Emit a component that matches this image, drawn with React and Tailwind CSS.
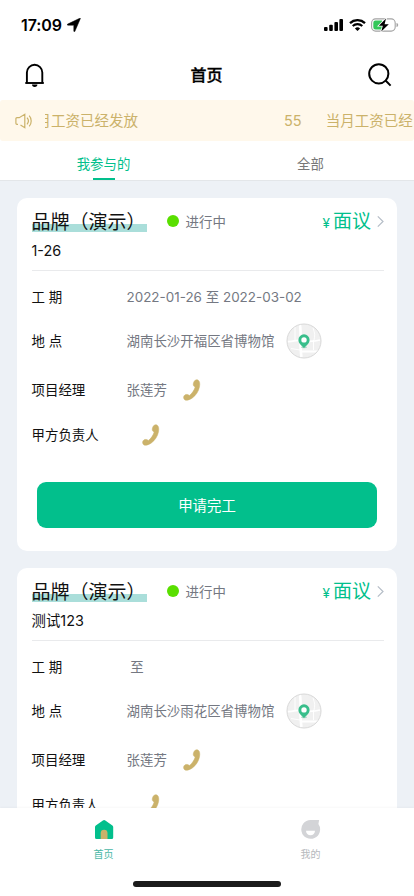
import React from 'react';

const FONT = "font-['Inter','Noto_Sans_CJK_SC',sans-serif]";

function StatusBar() {
  return (
    <div className="flex h-[50px] items-center justify-between pl-[21px] pr-[15px]">
      <div className="flex items-center gap-[5px]">
        <span className="text-[16px] font-semibold leading-none tracking-[-0.1px]">17:09</span>
        <svg className="h-[14px] w-[14px]" viewBox="0 0 14 14">
          <path d="M13.400.5 7.900 13.300c-.3.700-1.100.500-1.100-.2V7.600c0-.3-.1-.4-.4-.4H.9c-.8 0-.9-.8-.2-1.100L12.700.3c.5-.2.8-.1.700.2z" fill="#000" stroke="#000" strokeWidth=".5" />
        </svg>
      </div>
      <div className="flex items-center">
        <svg className="h-[12px] w-[19px]" viewBox="0 0 19 12">
          <rect x="0" y="8" width="3.600" height="4" rx="1" />
          <rect x="5.200" y="5.800" width="3.600" height="6.200" rx="1" />
          <rect x="10.400" y="3" width="3.600" height="9" rx="1" />
          <rect x="15.400" y="0" width="3.600" height="12" rx="1" />
        </svg>
        <svg className="ml-[6px] h-[12px] w-[17px]" viewBox="0 0 17 12" fill="none" stroke="#000">
          <path d="M1 4.100a11 11 0 0 1 15 0" strokeWidth="2.300" />
          <path d="M3.700 7a7.100 7.100 0 0 1 9.600 0" strokeWidth="2.100" />
          <path d="M8.500 12 5.900 9.400a3.800 3.800 0 0 1 5.200 0z" fill="#000" stroke="none" />
        </svg>
        <svg className="ml-[5px] h-[14px] w-[28px]" viewBox="0 0 28 14">
          <rect x=".6" y=".9" width="23.600" height="12.200" rx="4" fill="none" stroke="#a3a3a3" strokeWidth="1.100" />
          <path d="M25.500 5v4c1.200-.4 1.700-1.200 1.700-2s-.5-1.600-1.700-2z" fill="#a3a3a3" />
          <path d="M4.500 2.500h6.500v9h-6.500a2.200 2.200 0 0 1-2.200-2.200V4.700a2.200 2.200 0 0 1 2.200-2.200z" fill="#34c759" />
          <path d="M15 .6 7.800 7.700h4l-1.500 5.700L17.800 6.200h-4.200z" fill="#000" stroke="#fff" strokeWidth="1.500" paintOrder="stroke" />
        </svg>
      </div>
    </div>
  );
}

function Header() {
  return (
    <header className="flex h-[50px] items-center justify-between pl-[24px] pr-[22px]">
      <svg className="h-[26px] w-[21px]" viewBox="0 0 21 26" fill="none" stroke="#000" strokeWidth="1.900">
        <path d="M2.900 21V10.500a7.700 7.700 0 0 1 15.400 0V21" />
        <path d="M1.300 21h18.500" />
        <path d="M8 22.600h5.400a2.700 2.400 0 0 1-5.400 0z" fill="#000" stroke="none" />
      </svg>
      <h1 className="text-[16px] font-medium leading-none [-webkit-text-stroke:0.300px_#000]">首页</h1>
      <svg className="h-[24px] w-[24px]" viewBox="0 0 24 24" fill="none" stroke="#000" strokeWidth="2">
        <circle cx="10.800" cy="10.800" r="9.600" />
        <path d="m17.300 17.300 5.300 5.300" />
      </svg>
    </header>
  );
}

function Notice() {
  return (
    <div className="flex h-[41px] items-center overflow-hidden rounded-[3px] bg-[#fff8eb] pl-[15px] text-[14.500px] leading-none text-[#cbb26a]">
      <svg className="h-[16px] w-[19px] shrink-0" viewBox="0 0 19 16" fill="none" stroke="#cbb26a" strokeWidth="1.200">
        <path d="M3 11.300H1.900a1 1 0 0 1-1-1V5.700a1 1 0 0 1 1-1h2.300L9.800 1.300v13.400L5.500 12" />
        <path d="M12 4.700a5 5 0 0 1 0 6.600M14.200 2.700a8 8 0 0 1 0 10.600" />
      </svg>
      <div className="ml-[11px] flex w-[368px] overflow-hidden whitespace-nowrap leading-[20px]">
        <span className="-ml-[23px]">当月工资已经发放</span>
        <span className="ml-[146px]">55</span>
        <span className="ml-[24px]">当月工资已经发放</span>
      </div>
    </div>
  );
}

function Tabs() {
  return (
    <div className="flex h-[40px] border-b border-[#e3e6e9] text-[13.400px] shadow-[0_1px_1px_#e7eaee]">
      <div className="flex flex-1 flex-col items-center justify-between pt-[13px] text-[#02bf8c]">
        <span className="leading-[20px]">我参与的</span>
        <span className="h-[2px] w-[22px] bg-[#02bf8c]" />
      </div>
      <div className="flex flex-1 justify-center pt-[13px] leading-[20px] text-[#777]">全部</div>
    </div>
  );
}

function Phone() {
  return (
    <svg className="h-[22px] w-[18px]" viewBox="0 0 18 22">
      <path
        d="M11.200 2.300C12.100.9 13.900.4 15.200 1.200c1.500.8 1.900 3.500 1.300 6.600-.8 4.300-3.500 8.600-7.100 11.100-2.700 1.900-6 2.900-7.500 2-1.400-.9-1.700-2.800-.8-4.100.9-1.400 2.700-1.800 4.100-1 .7.400 1 .5 1.300.6 2.400-1.700 4.600-5 5.700-8.400-.4-.1-.6-.2-.9-.4-1.300-.9-1.500-2.900-.1-5.300z"
        fill="#cbb26a"
        stroke="#cbb26a"
        strokeWidth=".5"
      />
    </svg>
  );
}

function MapBadge() {
  return (
    <svg className="h-[36px] w-[36px]" viewBox="0 0 36 36">
      <circle cx="18" cy="18" r="17" fill="#f0f0f0" />
      <g fill="none" stroke="#fff">
        <path d="M14 2c1.500 10-.5 20 1.500 32" strokeWidth="2.600" />
        <path d="M1.500 18.500c6 .5 8-2 13-1s12 1.500 19.500-.5M14 28.500h19" strokeWidth="1.800" />
        <path d="M9 3v14M5 25.500l9 1.500M27 5c2 5 2 8 1 12M27.500 17v10" strokeWidth=".9" />
      </g>
      <circle cx="18" cy="18" r="17" fill="none" stroke="#d9d9d9" />
      <ellipse cx="18" cy="24.300" rx="3" ry="1" fill="#a9d5c3" />
      <path d="M18 11.300a5.600 5.600 0 0 0-5.600 5.600c0 3.900 3.600 5.500 5.600 8.100 2-2.600 5.600-4.200 5.600-8.100a5.600 5.600 0 0 0-5.600-5.600z" fill="#39be8b" />
      <circle cx="18" cy="16.900" r="2.700" fill="#fff" />
    </svg>
  );
}

function Label({ children }) {
  return <span className="w-[95px] shrink-0 whitespace-pre text-[#111]">{children}</span>;
}

function Card({ subtitle, period, place }) {
  return (
    <article className="h-[353px] shrink-0 rounded-[10px] bg-white pr-[13px] pl-[14.500px] pt-[6px] text-[13.450px] leading-[20px] text-[#747882]">
      <div className="flex h-[34px] items-center">
        <h2 className="flex h-[22px] w-[115px] items-center whitespace-nowrap bg-[linear-gradient(to_bottom,transparent_14px,#aadeda_14px)] pt-[3px] text-[19px] leading-[22px] text-[#111]">
          品牌（演示）
        </h2>
        <span className="ml-[20px] h-[12px] w-[12px] rounded-full bg-[#59df00]" />
        <span className="ml-[7px] pt-px">进行中</span>
        <span className="ml-auto flex items-baseline pt-[3px] text-[19px] leading-[24px] text-[#02bf8c]">
          <span className="mr-[3px] text-[13.500px]">¥</span>面议
        </span>
        <svg className="ml-[6px] h-[13px] w-[7px]" viewBox="0 0 7 13" fill="none" stroke="#b5bdc7" strokeWidth="1.200">
          <path d="m.8 1.300 5.200 5.200-5.200 5.200" />
        </svg>
      </div>
      <div className="h-[32px] pt-px text-[14.400px] leading-[24px] text-[#111]">{subtitle}</div>
      <div className="border-t border-[#e9eaec]" />
      <div className="flex h-[52px] items-center">
        <Label>工 期</Label>
        <span className="whitespace-pre">{period}</span>
      </div>
      <div className="flex h-[36px] items-center">
        <Label>地 点</Label>
        <span>{place}</span>
        <span className="ml-[12px]"><MapBadge /></span>
      </div>
      <div className="flex h-[62px] items-center">
        <Label>项目经理</Label>
        <span>张莲芳</span>
        <span className="ml-[16px]"><Phone /></span>
      </div>
      <div className="flex h-[28px] items-center">
        <Label>甲方负责人</Label>
        <span className="ml-[15.500px]"><Phone /></span>
      </div>
      <button className="ml-[5.500px] mt-[33px] block h-[46px] w-[340px] rounded-[9px] bg-[#02bf8c] pt-px text-[14.400px] text-white">
        申请完工
      </button>
    </article>
  );
}

function BottomNav() {
  return (
    <nav className="flex h-[88px] flex-col items-center bg-white text-[10px] leading-[14px] shadow-[0_-1px_2px_#00000008]">
      <div className="flex w-full">
        <div className="flex flex-1 flex-col items-center pt-[11px] text-[#48b7a6]">
          <svg className="h-[21px] w-[20px]" viewBox="0 0 20 21">
            <path d="M8.900 1.400a2 2 0 0 1 2.400 0l7.100 5a2 2 0 0 1 .8 1.600v10.500a1.500 1.500 0 0 1-1.500 1.500H2.500A1.500 1.500 0 0 1 1 18.500V8a2 2 0 0 1 .8-1.600z" fill="#02bf8c" />
            <path d="M6.700 20v-5.900a3.400 3.400 0 0 1 6.800 0V20z" fill="#c9b26a" />
          </svg>
          <span className="mt-[7px]">首页</span>
        </div>
        <div className="flex flex-1 flex-col items-center pt-[11px] text-[#b6b8bc]">
          <svg className="h-[21px] w-[20px]" viewBox="0 0 20 21">
            <path d="M9.500 1H17.600c.5 0 .7.400.4.800l-.6 3.200A9.400 9.400 0 1 1 9.500 1z" fill="#d3d4d7" />
            <path d="M5 11.700h9a4.500 4.500 0 0 1-9 0z" fill="#fff" />
          </svg>
          <span className="mt-[7px]">我的</span>
        </div>
      </div>
      <div className="mt-[20px] h-[6px] w-[148px] rounded-full bg-[#1b1b1b]" />
    </nav>
  );
}

export default function App() {
  return (
    <div className={`flex h-[896px] w-[414px] flex-col overflow-hidden bg-white text-black ${FONT}`}>
      <StatusBar />
      <Header />
      <Notice />
      <Tabs />
      <main className="flex min-h-0 flex-1 flex-col gap-[17px] overflow-hidden bg-[#edf1f6] px-[17px] pt-[17px]">
        <Card subtitle="1-26" period="2022-01-26 至 2022-03-02" place="湖南长沙开福区省博物馆" />
        <Card subtitle="测试123" period=" 至" place="湖南长沙雨花区省博物馆" />
      </main>
      <BottomNav />
    </div>
  );
}
